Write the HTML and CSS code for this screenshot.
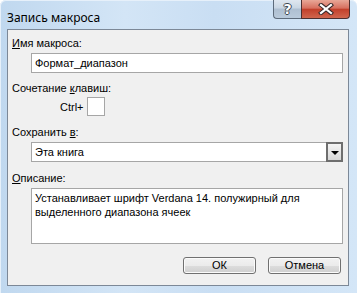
FILE: index.html
```html
<!DOCTYPE html>
<html lang="ru">
<head>
<meta charset="utf-8">
<title>Запись макроса</title>
<link rel="stylesheet" href="styles.css">
</head>
<body>
<div class="window">
  <div class="titlebar">
    <div class="title">Запись макроса</div>
    <div class="controls">
      <div class="btn-help"><span class="help-glyph">?</span></div>
      <div class="btn-close">
        <svg width="16" height="12" viewBox="0 0 16 12">
          <path d="M3 2 L13 10 M13 2 L3 10" stroke="#3b2a2a" stroke-width="4.2" stroke-linecap="square" fill="none"/>
          <path d="M3 2 L13 10 M13 2 L3 10" stroke="#ffffff" stroke-width="2.2" stroke-linecap="square" fill="none"/>
        </svg>
      </div>
    </div>
  </div>
  <div class="client">
    <div class="label l1"><u>И</u>мя макроса:</div>
    <div class="field f1">Формат_диапазон</div>
    <div class="label l2">Сочетание <u>к</u>лавиш:</div>
    <div class="shortcut">
      <span class="ctrl">Ctrl+</span>
      <span class="keybox"></span>
    </div>
    <div class="label l3">Сохранить <u>в</u>:</div>
    <div class="combo">
      <span class="combo-text">Эта книга</span>
      <span class="combo-btn"><span class="arrow"></span></span>
    </div>
    <div class="label l4"><u>О</u>писание:</div>
    <div class="textarea">Устанавливает шрифт Verdana 14. полужирный для выделенного диапазона ячеек</div>
    <div class="buttons">
      <div class="button ok">ОК</div>
      <div class="button cancel">Отмена</div>
    </div>
  </div>
</div>
</body>
</html>
```

FILE: styles.css
```css
html, body {
  margin: 0;
  padding: 0;
  background: #ffffff;
}

.window {
  width: 357px;
  height: 293px;
  box-sizing: border-box;
  padding: 0 8px 7px 7px;
  display: flex;
  flex-direction: column;
  background: linear-gradient(90deg, #c0d8ef 0%, #d3e5f6 35%, #c9def3 60%, #d4e6f7 100%);
  border-radius: 6px 6px 0 0;
  box-shadow: inset 1px 0 0 #e6f0fa, inset 0 1px 0 #e6f0fa;
  font-family: "Liberation Sans", Arial, sans-serif;
  font-size: 11px;
  color: #000000;
}

.titlebar {
  height: 29px;
  display: flex;
  align-items: flex-start;
  flex-shrink: 0;
}

.title {
  font-family: "Noto Sans", "Open Sans", sans-serif;
  font-size: 12px;
  line-height: 16px;
  padding-top: 10px;
  color: #000000;
}

.controls {
  margin-left: auto;
  margin-right: -1px;
  display: flex;
}

.btn-help {
  width: 27px;
  height: 18px;
  border: 1px solid #5d6b7b;
  border-right: none;
  border-top: none;
  border-radius: 0 0 0 4px;
  background: linear-gradient(180deg, #dfe7f0 0%, #c9d6e3 45%, #aebfd1 50%, #b9cadb 100%);
  display: flex;
  align-items: center;
  justify-content: center;
}

.help-glyph {
  font-family: "DejaVu Sans", sans-serif;
  font-weight: bold;
  font-size: 14px;
  line-height: 14px;
  color: #ffffff;
  text-shadow: -1px 0 0 #3c4650, 1px 0 0 #3c4650, 0 -1px 0 #3c4650, 0 1px 0 #3c4650;
}

.btn-close {
  width: 47px;
  height: 18px;
  border: 1px solid #4d2f2f;
  border-top: none;
  border-radius: 0 0 4px 0;
  background: linear-gradient(180deg, #e8a797 0%, #d7705f 45%, #c2402b 52%, #d0664e 100%);
  display: flex;
  align-items: center;
  justify-content: center;
}

.client {
  flex: 1;
  background: #f0f0f0;
  border: 1px solid #7c8897;
  display: flex;
  flex-direction: column;
  padding: 0 5px 0 4px;
}

.label {
  line-height: 14px;
  height: 14px;
  white-space: nowrap;
}

.label u {
  text-decoration: underline;
  text-underline-offset: 1px;
}

.l1 { margin-top: 6px; }
.l2 { margin-top: 8px; }
.l3 { margin-top: 9px; }
.l4 { margin-top: 9px; }

.field, .combo, .textarea {
  margin-left: 19px;
  background: #ffffff;
  border: 1px solid #a6a6a6;
  box-sizing: border-box;
}

.field {
  margin-top: 3px;
  height: 20px;
  line-height: 18px;
  padding-left: 3px;
}

.shortcut {
  margin-top: 2px;
  height: 19px;
  display: flex;
  align-items: center;
  padding-left: 48px;
}

.ctrl {
  margin-right: 3px;
}

.keybox {
  width: 18px;
  height: 19px;
  box-sizing: border-box;
  background: #ffffff;
  border: 1px solid #a6a6a6;
}

.combo {
  margin-top: 3px;
  height: 20px;
  display: flex;
  align-items: center;
  padding-left: 3px;
}

.combo-text {
  flex: 1;
}

.combo-btn {
  width: 17px;
  height: 20px;
  box-sizing: border-box;
  margin-right: -1px;
  border: 2px solid #6e6e6e;
  background: linear-gradient(180deg, #f4f4f4 0%, #e6e6e6 50%, #d6d6d6 100%);
  display: flex;
  align-items: center;
  justify-content: center;
}

.arrow {
  width: 0;
  height: 0;
  border-left: 4px solid transparent;
  border-right: 4px solid transparent;
  border-top: 4px solid #000000;
  margin-top: 1px;
}

.textarea {
  margin-top: 3px;
  height: 56px;
  padding: 2px 3px 0 3px;
  line-height: 14px;
}

.buttons {
  margin-top: 13px;
  display: flex;
  justify-content: flex-end;
  gap: 12px;
  padding-right: 2px;
}

.button {
  width: 73px;
  height: 17px;
  box-sizing: border-box;
  border: 1px solid #707070;
  border-radius: 3px;
  background: linear-gradient(180deg, #f2f2f2 0%, #ebebeb 50%, #dddddd 51%, #cfcfcf 100%);
  box-shadow: inset 0 0 0 1px #fbfbfb;
  text-align: center;
  line-height: 15px;
}
```
